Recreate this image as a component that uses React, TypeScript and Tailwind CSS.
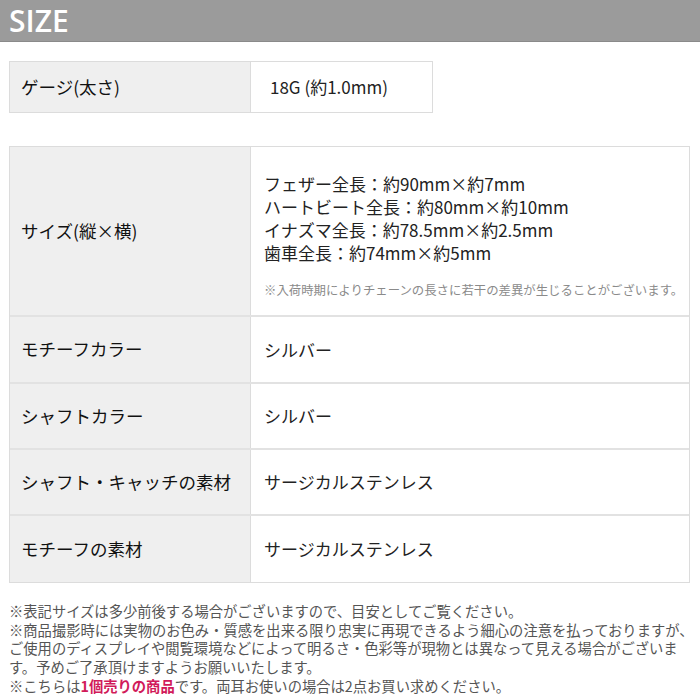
const jp = "font-['Noto_Sans_CJK_JP','Noto_Sans',sans-serif]";

const ROWS = [
  { label: "モチーフカラー", value: "シルバー", h: "h-[67px]" },
  { label: "シャフトカラー", value: "シルバー", h: "h-[66px]" },
  { label: "シャフト・キャッチの素材", value: "サージカルステンレス", h: "h-[66px]" },
  { label: "モチーフの素材", value: "サージカルステンレス", h: "h-[66px]" },
];

const SIZES = [
  "フェザー全長：約90mm×約7mm",
  "ハートビート全長：約80mm×約10mm",
  "イナズマ全長：約78.5mm×約2.5mm",
  "歯車全長：約74mm×約5mm",
];

export default function App() {
  return (
    <div className={`w-[700px] h-[700px] bg-white text-[#222] ${jp}`}>
      <div className="h-[42px] bg-[#9b9b9b] border-b border-[#8a8a8a] flex items-center px-[9px]">
        <h1 className="font-['Open_Sans',sans-serif] font-semibold text-[30px] leading-none text-white">SIZE</h1>
      </div>

      <div className="px-[9px]">
        {/* gauge */}
        <div className="mt-[19px] w-[424px] h-[52px] border border-[#dcdcdc] grid grid-cols-[241px_1fr]">
          <div className="bg-[#efefef] border-r border-[#dcdcdc] flex items-center pl-[11px] text-[17.5px] text-[#111]">ゲージ(太さ)</div>
          <div className="flex items-center pl-[19px] text-[17px]">18G (約1.0mm)</div>
        </div>

        {/* spec table */}
        <div className="mt-[33px] w-[681px] border border-[#dcdcdc]">
          <div className="h-[170px] grid grid-cols-[241px_1fr] border-b-2 border-[#e2e2e2]">
            <div className="bg-[#efefef] border-r border-[#dcdcdc] flex items-center pl-[11px] text-[17.5px] text-[#111]">サイズ(縦×横)</div>
            <div className="pl-[13px] pt-[25px]">
              {SIZES.map((s) => (
                <div key={s} className="text-[17px] leading-[23px]">{s}</div>
              ))}
              <div className="mt-[17px] text-[12.4px] leading-[18px] text-[#8a8a8a] whitespace-nowrap">
                ※入荷時期によりチェーンの長さに若干の差異が生じることがございます。
              </div>
            </div>
          </div>
          {ROWS.map((r, i) => (
            <div key={i} className={`${r.h} grid grid-cols-[241px_1fr] ${i < ROWS.length - 1 ? "border-b-2 border-[#e2e2e2]" : ""}`}>
              <div className="bg-[#efefef] border-r border-[#dcdcdc] flex items-center pl-[11px] text-[17.5px] text-[#111] whitespace-nowrap">{r.label}</div>
              <div className="flex items-center pl-[13px] text-[17px]">{r.value}</div>
            </div>
          ))}
        </div>

        {/* notes */}
        <div className="mt-[19px] text-[14.3px] leading-[18.7px] text-[#555] whitespace-nowrap">
          <p>※表記サイズは多少前後する場合がございますので、目安としてご覧ください。</p>
          <p>
            ※商品撮影時には実物のお色み・質感を出来る限り忠実に再現できるよう細心の注意を払っておりますが、
            <br />
            ご使用のディスプレイや閲覧環境などによって明るさ・色彩等が現物とは異なって見える場合がございま
            <br />
            す。予めご了承頂けますようお願いいたします。
          </p>
          <p>
            ※こちらは<span className="text-[#d11a5a] font-bold">1個売りの商品</span>です。両耳お使いの場合は2点お買い求めください。
          </p>
        </div>
      </div>
    </div>
  );
}
